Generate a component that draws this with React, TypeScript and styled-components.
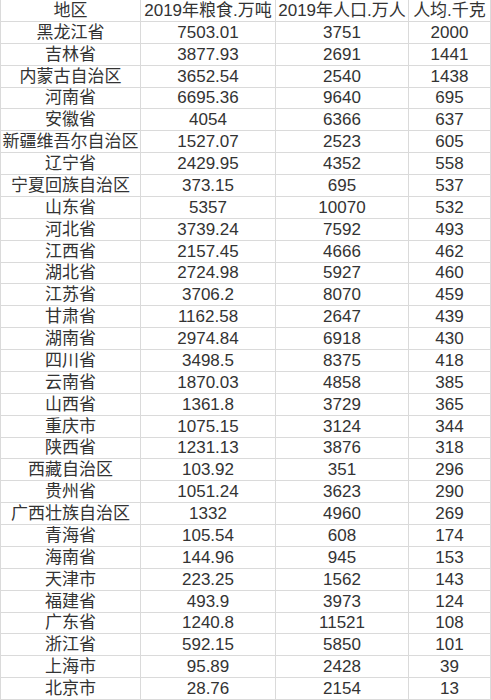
import React from "react";
import styled, { createGlobalStyle } from "styled-components";

const GlobalStyle = createGlobalStyle`
	html, body {
		margin: 0;
		padding: 0;
		background: #ffffff;
	}
	body {
		font-family: "Liberation Sans", "Noto Sans CJK SC", sans-serif;
	}
`;

const Sheet = styled.div`
	display: grid;
	grid-template-columns: 140px 135px 133px 82px;
	grid-auto-rows: 21.875px;
	width: 490px;
	border-left: 1px solid #dadada;
	box-sizing: border-box;
	color: #333333;
	font-size: 17px;
`;

const Cell = styled.div`
	display: flex;
	align-items: center;
	justify-content: center;
	box-sizing: border-box;
	border-right: 1px solid #dadada;
	border-bottom: 1px solid #dadada;
	white-space: nowrap;
	line-height: 1;
	overflow: visible;
`;

type Row = [string, string, string, string];

const header: Row = ["地区", "2019年粮食.万吨", "2019年人口.万人", "人均.千克"];

const rows: Row[] = [
	["黑龙江省", "7503.01", "3751", "2000"],
	["吉林省", "3877.93", "2691", "1441"],
	["内蒙古自治区", "3652.54", "2540", "1438"],
	["河南省", "6695.36", "9640", "695"],
	["安徽省", "4054", "6366", "637"],
	["新疆维吾尔自治区", "1527.07", "2523", "605"],
	["辽宁省", "2429.95", "4352", "558"],
	["宁夏回族自治区", "373.15", "695", "537"],
	["山东省", "5357", "10070", "532"],
	["河北省", "3739.24", "7592", "493"],
	["江西省", "2157.45", "4666", "462"],
	["湖北省", "2724.98", "5927", "460"],
	["江苏省", "3706.2", "8070", "459"],
	["甘肃省", "1162.58", "2647", "439"],
	["湖南省", "2974.84", "6918", "430"],
	["四川省", "3498.5", "8375", "418"],
	["云南省", "1870.03", "4858", "385"],
	["山西省", "1361.8", "3729", "365"],
	["重庆市", "1075.15", "3124", "344"],
	["陕西省", "1231.13", "3876", "318"],
	["西藏自治区", "103.92", "351", "296"],
	["贵州省", "1051.24", "3623", "290"],
	["广西壮族自治区", "1332", "4960", "269"],
	["青海省", "105.54", "608", "174"],
	["海南省", "144.96", "945", "153"],
	["天津市", "223.25", "1562", "143"],
	["福建省", "493.9", "3973", "124"],
	["广东省", "1240.8", "11521", "108"],
	["浙江省", "592.15", "5850", "101"],
	["上海市", "95.89", "2428", "39"],
	["北京市", "28.76", "2154", "13"],
];

export default function App() {
	return (
		<>
			<GlobalStyle />
			<Sheet>
				{[header, ...rows].map((r, i) =>
					r.map((v, j) => <Cell key={i + "-" + j}>{v}</Cell>)
				)}
			</Sheet>
		</>
	);
}
